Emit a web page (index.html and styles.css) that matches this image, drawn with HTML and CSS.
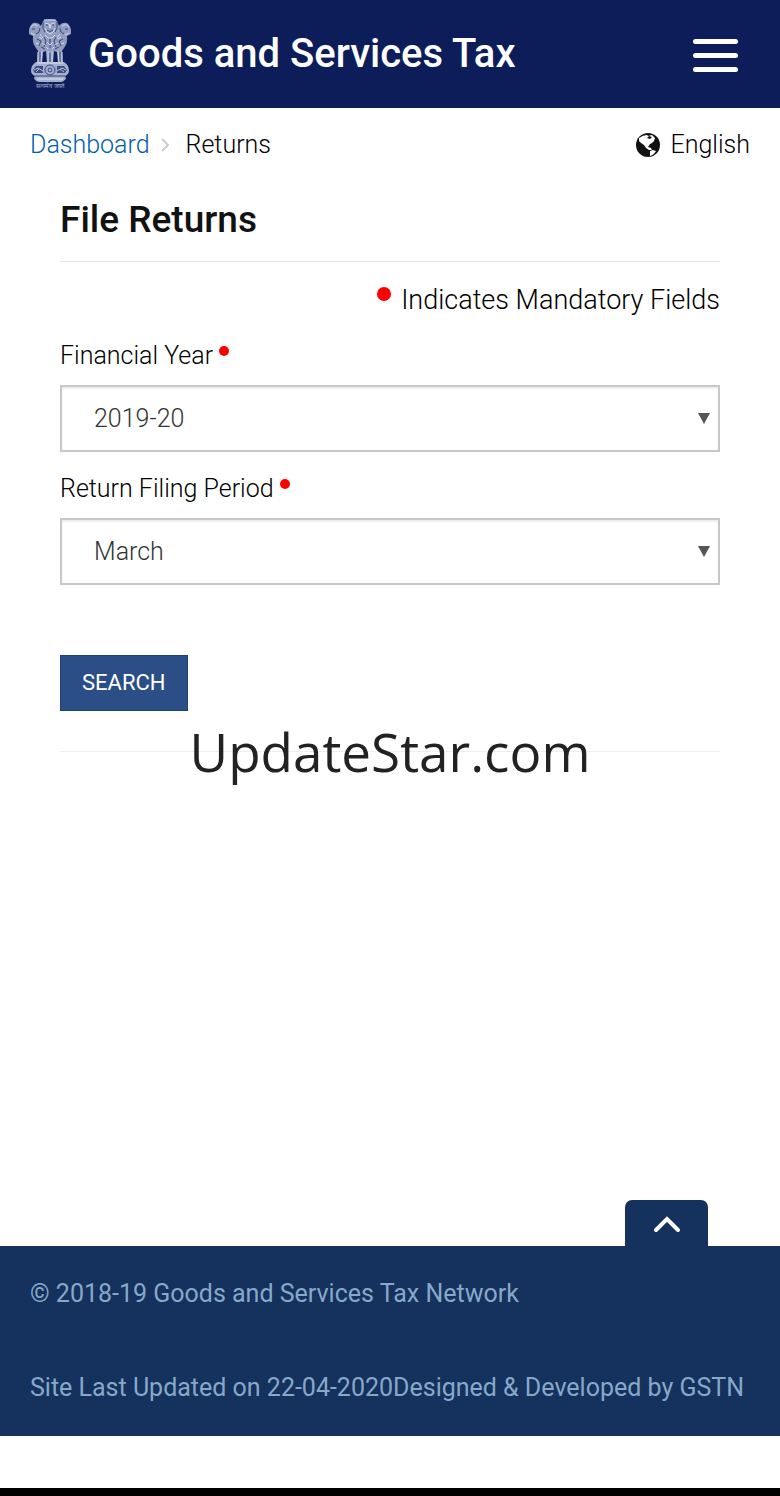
FILE: index.html
```html
<!DOCTYPE html>
<html lang="en">
<head>
<meta charset="utf-8">
<meta name="viewport" content="width=device-width, initial-scale=1">
<title>Goods and Services Tax</title>
<link rel="stylesheet" href="styles.css">
</head>
<body>
<header class="topbar">
    <a class="brand" href="#">
        <svg class="emblem" viewBox="0 0 44 72" aria-hidden="true">
            <!-- lions -->
            <g fill="#929dc0">
                <path d="M15 3Q17 1 22 1Q27 1 29 3L31 8Q34 4 39 5Q43 8 43 13L43 16L39 18Q40 25 36 30L34 33L35 46H30L29 34L26 33L25 46H19L18 33L15 34L14 46H9L10 33L8 30Q4 25 5 18L1 16L1 13Q1 8 5 5Q10 4 13 8Z"/>
            </g>
            <g fill="none" stroke="#39477e" stroke-width="1">
                <path d="M15 4Q14 11 17 14M29 4Q30 11 27 14M18 7H20M24 7H26M19 12Q22 15 25 12"/>
                <path d="M4 11H7M8 16Q12 15 12 10M40 11H37M36 16Q32 15 32 10"/>
                <path d="M9 21L13 23L11 28M16 19L18 23L16 29M22 20V30M28 19L26 23L28 29M35 21L31 23L33 28"/>
                <path d="M12 34V44M22 35V45M32 34V44M13 29L17 31M31 29L27 31"/>
            </g>
            <g fill="none" stroke="#d3d9e9" stroke-width="1">
                <path d="M16 2H28M17 5L21 6L22 10L23 6L27 5M17 10Q18 15 22 16Q26 15 27 10"/>
                <path d="M3 9Q6 5 10 8M34 8Q38 5 41 9M3 15L7 17M41 15L37 17M12 16L15 20M32 16L29 20"/>
                <path d="M11 19L14 21M17 17L20 20L24 20L27 17M33 19L30 21M8 25L11 26M14 25L17 27M19 24L22 27L25 24M27 27L30 25M33 26L36 25M18 29L20 31M26 29L24 31"/>
                <path d="M10 34V45M14 33L13 45M20 33V44M24 33V44M30 33L31 45M34 34V45"/>
            </g>
            <!-- abacus and base -->
            <path fill="#a5afce" d="M8 44H36Q41 47 41 53Q41 56 37 58L38 60Q37 63 33 64H11Q7 63 6 60L7 58Q3 56 3 53Q3 47 8 44Z"/>
            <path fill="#3b4a80" d="M8 48H15V55H7L5 52ZM29 48H36L39 52L37 55H29Z"/>
            <g fill="none" stroke="#b9c2da" stroke-width="1">
                <path d="M6 52L10 50L15 53M8 54L11 51M29 53L34 50L38 52M32 51L36 54"/>
            </g>
            <g fill="none" stroke="#39477e" stroke-width="1">
                <circle cx="22" cy="52" r="5"/>
                <circle cx="22" cy="52" r="2"/>
                <path d="M7 58H37"/>
            </g>
            <path fill="none" stroke="#dde3f1" d="M9 45H35M9 61H35"/>
            <text x="22" y="70" text-anchor="middle" class="motto">सत्यमेव जयते</text>
        </svg>
        <span>Goods and Services Tax</span>
    </a>
    <button class="menu" type="button" aria-label="Menu">
        <span></span>
        <span></span>
        <span></span>
    </button>
</header>

<nav class="crumbs">
    <a href="#">Dashboard</a>
    <svg class="sep" viewBox="0 0 8 14" aria-hidden="true"><path d="M1 1L7 7L1 13"/></svg>
    <span>Returns</span>
    <button class="lang" type="button">
        <svg class="globe" viewBox="0 0 26 26" aria-hidden="true">
            <circle cx="13" cy="13" r="12"/>
            <path d="M4 6Q8 3 12 3L13 4L17 3L20 6L19 9L17 11L15 12L13 15L16 16L17 18L14 18L11 16L9 13L6 11L4 9Z"/>
            <path d="M14 4L17 5L15 7L12 6Z" class="sea"/>
            <path d="M15 19L18 18L21 19Q19 23 15 24Z"/>
        </svg>
        English
    </button>
</nav>

<main class="content">
    <h1>File Returns</h1>
    <p class="mandatory"><i class="dot big"></i>Indicates Mandatory Fields</p>
    <form>
        <div class="field">
            <label for="year">Financial Year<i class="dot"></i></label>
            <div class="select">
                <select id="year">
                    <option>2019-20</option>
                </select>
            </div>
        </div>
        <div class="field">
            <label for="period">Return Filing Period<i class="dot"></i></label>
            <div class="select">
                <select id="period">
                    <option>March</option>
                </select>
            </div>
        </div>
        <button class="search" type="submit">SEARCH</button>
    </form>
    <hr>
</main>

<footer>
    <a class="totop" href="#" aria-label="Back to top">
        <svg viewBox="0 0 28 18" aria-hidden="true"><path d="M3 15L14 4L25 15"/></svg>
    </a>
    <div class="footer">
        <p>© 2018-19 Goods and Services Tax Network</p>
        <p>Site Last Updated on 22-04-2020Designed &amp; Developed by GSTN</p>
    </div>
</footer>
<div class="bottombar"></div>
<div class="watermark">UpdateStar.com</div>
</body>
</html>
```
FILE: styles.css
```css
* {
    box-sizing: border-box;
}
body {
    margin: 0;
    min-height: 100vh;
    display: flex;
    flex-direction: column;
    position: relative;
    background: #fff;
    color: #000;
    font-family: Roboto, "Liberation Sans", sans-serif;
    font-size: 25px;
    font-weight: 300;
    line-height: 30px;
}
button, select {
    font: inherit;
    color: inherit;
}
a {
    text-decoration: none;
}
p {
    margin: 0;
}

/* header */
.topbar {
    display: flex;
    align-items: center;
    justify-content: space-between;
    padding: 18px 42px 18px 28px;
    background: #0c1d59;
}
.brand {
    display: flex;
    align-items: center;
    gap: 16px;
    color: #fff;
    font-size: 40px;
    font-weight: 500;
}
.emblem {
    width: 44px;
    height: 72px;
}
.motto {
    fill: #a9b4d2;
    font-size: 6px;
    font-weight: 400;
}
.menu {
    display: flex;
    flex-direction: column;
    gap: 9px;
    padding: 2px 0 0;
    border: 0;
    background: none;
}
.menu span {
    width: 45px;
    height: 5px;
    border-radius: 3px;
    background: #fff;
}

/* breadcrumb */
.crumbs {
    display: flex;
    align-items: center;
    padding: 22px 30px;
}
.crumbs a {
    color: #0060b0;
}
.sep {
    width: 8px;
    height: 14px;
    margin: 0 17px 0 11px;
    fill: none;
    stroke: #ccc;
    stroke-width: 2;
}
.lang {
    display: flex;
    align-items: center;
    gap: 10px;
    margin-left: auto;
    padding: 0;
    border: 0;
    background: none;
}
.globe {
    width: 26px;
    height: 26px;
    fill: #111;
}
.globe path {
    fill: #fff;
}
.globe .sea {
    fill: #111;
}

/* form */
.content {
    flex: 1;
    padding: 16px 60px;
}
h1 {
    margin: 0 0 23px;
    padding-bottom: 19px;
    border-bottom: 1px solid #e5e5e5;
    color: #111;
    font-size: 37px;
    font-weight: 500;
    line-height: 44px;
}
.mandatory {
    font-size: 27px;
    text-align: right;
}
.dot {
    display: inline-block;
    width: 10px;
    height: 10px;
    margin-left: 6px;
    border-radius: 50%;
    background: #f00;
    vertical-align: 8px;
}
.dot.big {
    width: 14px;
    height: 14px;
    margin-right: 10px;
}
.field {
    margin-top: 26px;
}
.field + .field {
    margin-top: 22px;
}
.field label {
    display: block;
    margin-bottom: 14px;
}
.select {
    position: relative;
}
.select select {
    display: block;
    width: 100%;
    height: 67px;
    padding: 0 32px;
    border: 2px solid #c8c8c8;
    border-radius: 0;
    background: #fff;
    box-shadow: inset 0 2px 2px #eee;
    color: #333;
    appearance: none;
}
.select::after {
    content: "";
    position: absolute;
    top: 28px;
    right: 10px;
    border: 6px solid transparent;
    border-top: 11px solid #555;
    border-bottom: 0;
    pointer-events: none;
}
.search {
    margin-top: 70px;
    padding: 12px 21px;
    border: 1px solid #203f76;
    background: #2c4e86;
    color: #fff;
    font-size: 22px;
    font-weight: 400;
}
hr {
    margin: 40px 0 0;
    border: 0;
    border-top: 1px solid #eee;
}
.watermark {
    position: absolute;
    top: 50%;
    left: 0;
    right: 0;
    color: #222;
    font-family: "Open Sans", "Noto Sans", sans-serif;
    font-size: 53px;
    font-weight: 400;
    line-height: 76px;
    margin-top: -34px;
    text-align: center;
    pointer-events: none;
}

/* footer */
.totop {
    display: flex;
    justify-content: center;
    width: 83px;
    height: 46px;
    margin: 0 72px 0 auto;
    padding-top: 15px;
    border-radius: 7px 7px 0 0;
    background: #15315d;
}
.totop svg {
    width: 28px;
    height: 18px;
    fill: none;
    stroke: #fff;
    stroke-width: 4;
    stroke-linecap: round;
}
.footer {
    display: flex;
    flex-direction: column;
    gap: 64px;
    padding: 33px 30px;
    background: #15315d;
    color: #86a9c9;
    font-weight: 400;
}
.bottombar {
    height: 8px;
    margin-top: 52px;
    background: #000;
}
```
